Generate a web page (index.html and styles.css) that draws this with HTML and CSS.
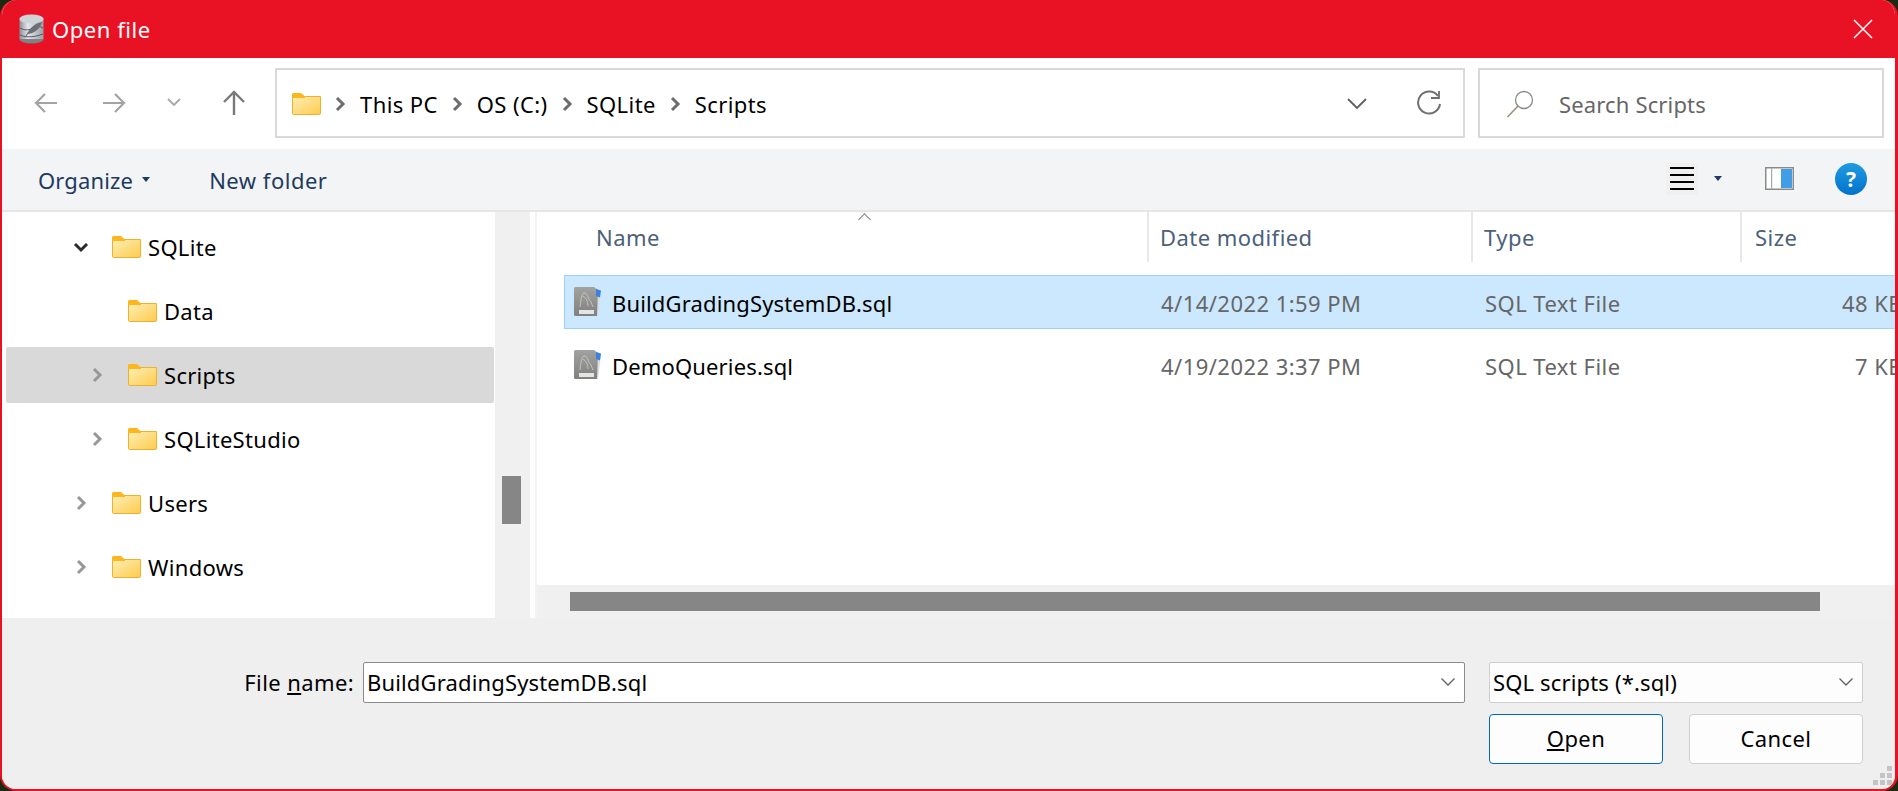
FILE: index.html
```html
<!DOCTYPE html>
<html lang="en">
<head>
  <meta charset="UTF-8">
  <title>Open file</title>
  <link rel="stylesheet" href="styles.css">
</head>
<body>
  <svg class="defs" width="0" height="0">
    <defs>
      <linearGradient id="folderFill" x1="0" y1="0" x2="1" y2="1">
        <stop offset="0" stop-color="#ffefb5"/>
        <stop offset="1" stop-color="#fdcb4e"/>
      </linearGradient>
      <linearGradient id="dbFill" x1="0" y1="0" x2="1" y2="0">
        <stop offset="0" stop-color="#8b8f96"/>
        <stop offset="0.35" stop-color="#e4e6ea"/>
        <stop offset="1" stop-color="#9a9ea6"/>
      </linearGradient>
      <linearGradient id="sqlFill" x1="0" y1="0" x2="0" y2="1">
        <stop offset="0" stop-color="#a2a2a0"/>
        <stop offset="1" stop-color="#808080"/>
      </linearGradient>
      <symbol id="folder" viewBox="0 0 29 22">
        <path d="M.5 3.5h28v17a1 1 0 0 1-1 1H1.500a1 1 0 0 1-1-1z" fill="url(#folderFill)" stroke="#efb02c"/>
        <path d="M0 1.500A1.500 1.500 0 0 1 1.500 0h7.500l4 3.500v1.500H0z" fill="#fbb71c"/>
      </symbol>
      <symbol id="chev-right" viewBox="0 0 12 16">
        <path d="M3 2l6 6-6 6" fill="none" stroke="currentColor" stroke-width="3"/>
      </symbol>
      <symbol id="chev-down" viewBox="0 0 16 12">
        <path d="M2 3l6 6 6-6" fill="none" stroke="currentColor" stroke-width="3"/>
      </symbol>
      <symbol id="thin-down" viewBox="0 0 16 10">
        <path d="M1.500 1.500L8 8l6.500-6.500" fill="none" stroke="currentColor" stroke-width="1.300"/>
      </symbol>
      <symbol id="sqlfile" viewBox="0 0 28 30">
        <path d="M22 3l5 1-3 25-4 0z" fill="#dcdcde"/>
        <path d="M1.500 0H20l4 3-1 26H1.500A1.500 1.500 0 0 1 0 27.500V1.500A1.500 1.500 0 0 1 1.500 0z" fill="url(#sqlFill)"/>
        <path d="M6 20C7 11 8 5 11 6c3 1 3 6 6 9l2 5M9 9c3 2 5 5 5 10" fill="none" stroke="#cfcfcd" stroke-width=".8"/>
        <rect x="5" y="23" width="15" height="4" fill="#e4e4e2"/>
        <path d="M22 2l5 1.500-1 7-4-1.500z" fill="#3b82e0"/>
      </symbol>
    </defs>
  </svg>

  <div class="dialog">
    <header class="titlebar">
      <svg class="app-icon" width="25" height="30" viewBox="0 0 25 30">
        <ellipse cx="12.500" cy="25" rx="12" ry="4.500" fill="#7d8188"/>
        <rect x=".5" y="5" width="24" height="20" fill="url(#dbFill)"/>
        <ellipse cx="12.500" cy="5" rx="12" ry="4.500" fill="#cfd2d7"/>
        <path d="M1 14c5 3 10 2 13 0s7-2 10 0M1 21c7 3 15 2 23-1" fill="none" stroke="#555a60" stroke-width="1"/>
        <path d="M5 25C9 16 15 9 23 8c-2 7-7 11-14 12z" fill="#6b7076"/>
      </svg>
      <span class="title-text">Open file</span>
      <svg class="close-icon" width="20" height="20" viewBox="0 0 20 20">
        <path d="M1 1l18 18M19 1L1 19" stroke="#fff" stroke-width="1.500"/>
      </svg>
    </header>

    <div class="addressbar">
      <div class="nav-btns">
        <svg class="nav-back" width="24" height="22" viewBox="0 0 24 22"><path d="M23 11H2M11 2l-9 9 9 9" fill="none" stroke="#a3a3a3" stroke-width="2.200"/></svg>
        <svg class="nav-forward" width="24" height="22" viewBox="0 0 24 22"><path d="M1 11h21M13 2l9 9-9 9" fill="none" stroke="#a3a3a3" stroke-width="2.200"/></svg>
        <svg class="nav-recent" width="14" height="9" viewBox="0 0 14 9"><path d="M1 1l6 6 6-6" fill="none" stroke="#a8a8a8" stroke-width="1.800"/></svg>
        <svg class="nav-up" width="24" height="26" viewBox="0 0 24 26"><path d="M12 25V3M2 12l10-10 10 10" fill="none" stroke="#7a7a7a" stroke-width="2.400"/></svg>
      </div>
      <div class="address-box">
        <svg class="crumb-folder" width="29" height="22"><use href="#folder"/></svg>
        <svg class="crumb-sep"><use href="#chev-right"/></svg>
        <span>This PC</span>
        <svg class="crumb-sep"><use href="#chev-right"/></svg>
        <span>OS (C:)</span>
        <svg class="crumb-sep"><use href="#chev-right"/></svg>
        <span>SQLite</span>
        <svg class="crumb-sep"><use href="#chev-right"/></svg>
        <span>Scripts</span>
        <svg class="address-drop" width="22" height="13" viewBox="0 0 22 13"><path d="M2 2l9 9 9-9" fill="none" stroke="#5f5f5f" stroke-width="1.800"/></svg>
        <svg class="address-refresh" width="25" height="27" viewBox="0 0 25 27"><path d="M21 6a11 11 0 1 0 2 8" fill="none" stroke="#6f6f6f" stroke-width="2"/><path d="M22 1v7h-8" fill="none" stroke="#6f6f6f" stroke-width="1.800"/></svg>
      </div>
      <div class="search-box">
        <svg width="28" height="28" viewBox="0 0 28 28"><circle cx="18" cy="10" r="8.500" fill="none" stroke="#8a8a8a" stroke-width="1.300"/><path d="M12 16L1.500 27" stroke="#9a8f7c" stroke-width="1.600"/></svg>
        <span>Search Scripts</span>
      </div>
    </div>

    <div class="toolbar">
      <span class="tool-btn">Organize</span>
      <span class="caret caret-organize"></span>
      <span class="tool-btn tool-new">New folder</span>
      <div class="tool-right">
        <span class="view-btn">
          <span class="view-line"></span><span class="view-line"></span><span class="view-line"></span><span class="view-line"></span>
        </span>
        <span class="caret"></span>
        <svg class="pane-icon" width="29" height="23" viewBox="0 0 29 23">
          <rect x=".75" y=".75" width="27.500" height="21.500" fill="#fff" stroke="#8b8b8b" stroke-width="1.500"/>
          <rect x="6" y="1" width="1.200" height="21" fill="#a8a8a8"/>
          <rect x="16" y="2" width="11" height="19" fill="#419de6"/>
        </svg>
        <span class="help-icon">?</span>
      </div>
    </div>

    <div class="panes">
      <nav class="tree">
        <div class="tree-row level-1">
          <svg class="tree-chev chev-open"><use href="#chev-down"/></svg>
          <svg class="folder"><use href="#folder"/></svg>
          <span>SQLite</span>
        </div>
        <div class="tree-row level-2">
          <span class="tree-chev"></span>
          <svg class="folder"><use href="#folder"/></svg>
          <span>Data</span>
        </div>
        <div class="tree-row level-2 tree-selected">
          <svg class="tree-chev"><use href="#chev-right"/></svg>
          <svg class="folder"><use href="#folder"/></svg>
          <span>Scripts</span>
        </div>
        <div class="tree-row level-2">
          <svg class="tree-chev"><use href="#chev-right"/></svg>
          <svg class="folder"><use href="#folder"/></svg>
          <span>SQLiteStudio</span>
        </div>
        <div class="tree-row level-1">
          <svg class="tree-chev"><use href="#chev-right"/></svg>
          <svg class="folder"><use href="#folder"/></svg>
          <span>Users</span>
        </div>
        <div class="tree-row level-1">
          <svg class="tree-chev"><use href="#chev-right"/></svg>
          <svg class="folder"><use href="#folder"/></svg>
          <span>Windows</span>
        </div>
      </nav>
      <div class="tree-scroll"><div class="tree-thumb"></div></div>
      <div class="splitter"></div>

      <section class="files">
        <div class="file-list">
          <div class="file-head">
            <span class="sort-arrow"></span>
            <div class="col-name">Name</div>
            <div>Date modified</div>
            <div>Type</div>
            <div>Size</div>
          </div>
          <div class="file-row file-selected">
            <div class="file-name"><svg width="28" height="30"><use href="#sqlfile"/></svg><span>BuildGradingSystemDB.sql</span></div>
            <div class="file-meta">4/14/2022 1:59 PM</div>
            <div class="file-meta">SQL Text File</div>
            <div class="file-meta file-size">48 KB</div>
          </div>
          <div class="file-row">
            <div class="file-name"><svg width="28" height="30"><use href="#sqlfile"/></svg><span>DemoQueries.sql</span></div>
            <div class="file-meta">4/19/2022 3:37 PM</div>
            <div class="file-meta">SQL Text File</div>
            <div class="file-meta file-size">7 KB</div>
          </div>
        </div>
        <div class="hscroll"><div class="hscroll-thumb"></div></div>
      </section>
    </div>

    <footer class="footer">
      <div class="footer-row">
        <label class="name-label" for="fileName">File <u>n</u>ame:</label>
        <div class="combo combo-name">
          <span id="fileName">BuildGradingSystemDB.sql</span>
          <svg width="16" height="10"><use href="#thin-down"/></svg>
        </div>
        <div class="combo combo-type">
          <span>SQL scripts (*.sql)</span>
          <svg width="16" height="10"><use href="#thin-down"/></svg>
        </div>
      </div>
      <div class="footer-buttons">
        <button class="btn btn-default"><u>O</u>pen</button>
        <button class="btn">Cancel</button>
      </div>
      <div class="grip">
        <i></i><i></i><i></i><i></i><i></i><i></i>
      </div>
    </footer>
  </div>
</body>
</html>
```

FILE: styles.css
```css
html, body {
  margin: 0;
  height: 100%;
  overflow: hidden;
  background-color: #1d2a12;
}

body {
  font-family: "Noto Sans", "Open Sans", sans-serif;
  font-size: 22px;
  letter-spacing: 0.15px;
  color: #000;
}

.defs {
  position: absolute;
}

.dialog {
  box-sizing: border-box;
  height: 791px;
  display: flex;
  flex-direction: column;
  border: 2px solid #e81224;
  border-right-width: 3px;
  border-top-width: 0;
  border-radius: 16px;
  overflow: hidden;
  background-color: #f0f0f0;
}

/* Title bar */
.titlebar {
  height: 58px;
  flex: none;
  display: flex;
  align-items: center;
  padding: 0 22px 0 17px;
  background-color: #e81224;
  color: #fff;
}

.app-icon {
  margin-right: 8px;
}

.title-text {
  letter-spacing: 0.55px;
}

.close-icon {
  margin-left: auto;
}

/* Address bar */
.addressbar {
  height: 91px;
  flex: none;
  box-sizing: border-box;
  display: flex;
  align-items: flex-start;
  padding-top: 10px;
  background-color: #fff;
}

.nav-btns {
  width: 273px;
  height: 69px;
  flex: none;
  display: flex;
  align-items: center;
  padding-left: 32px;
  box-sizing: border-box;
}

.nav-forward {
  margin-left: 44px;
}

.nav-recent {
  margin-left: 41px;
}

.nav-up {
  margin-left: 41px;
}

.address-box,
.search-box {
  box-sizing: border-box;
  height: 70px;
  display: flex;
  align-items: center;
  border: 2px solid #d9d9d9;
  background-color: #fff;
}

.address-box {
  width: 1190px;
  padding: 1px 0 0 15px;
  letter-spacing: 0.4px;
}

.crumb-sep {
  width: 12px;
  height: 16px;
  margin: 0 14px 0 13px;
  color: #6d6d6d;
}

.address-drop {
  margin-left: auto;
}

.address-refresh {
  margin: 0 21px 0 49px;
}

.search-box {
  width: 406px;
  margin-left: 13px;
  padding: 1px 0 0 26px;
  color: #666;
}

.search-box svg {
  margin-right: 25px;
}

/* Toolbar */
.toolbar {
  height: 63px;
  flex: none;
  box-sizing: border-box;
  display: flex;
  align-items: center;
  padding-left: 36px;
  background-color: #f3f4f6;
  border-bottom: 2px solid #e6e6e6;
  color: #1e3a5f;
}

.caret {
  width: 0;
  height: 0;
  border: 4px solid transparent;
  border-top: 5px solid #1e3a5f;
  border-bottom: 0;
}

.caret-organize {
  margin-left: 9px;
}

.tool-new {
  margin-left: 59px;
  letter-spacing: 0.5px;
}

.tool-right {
  margin-left: auto;
  display: flex;
  align-items: center;
  padding: 0 28px 2px 0;
}

.view-btn {
  width: 32px;
  height: 32px;
  display: flex;
  flex-direction: column;
  justify-content: center;
  align-items: center;
  gap: 5px;
  border-radius: 3px;
  background-color: #f0f0f0;
}

.view-line {
  width: 24px;
  height: 2px;
  background-color: #000;
}

.view-btn + .caret {
  margin-left: 16px;
}

.pane-icon {
  margin-left: 43px;
}

.help-icon {
  width: 32px;
  height: 32px;
  margin-left: 41px;
  display: flex;
  align-items: center;
  justify-content: center;
  border-radius: 50%;
  background: linear-gradient(#1f9be0, #0273cd);
  color: #fff;
  font-size: 21px;
  font-weight: 700;
}

/* Tree and file list */
.panes {
  flex: 1;
  min-height: 0;
  display: flex;
  background-color: #fff;
}

.tree {
  width: 493px;
  flex: none;
  box-sizing: border-box;
  padding: 7px 1px 0 4px;
}

.tree-row {
  height: 56px;
  margin-bottom: 8px;
  display: flex;
  align-items: center;
  border-radius: 2px;
  gap: 7px;
  letter-spacing: 0.3px;
}

.level-1 {
  padding-left: 69px;
}

.level-2 {
  padding-left: 85px;
}

.tree-chev {
  width: 12px;
  height: 16px;
  margin-right: 18px;
  color: #989898;
  flex: none;
}

.chev-open {
  width: 16px;
  height: 12px;
  margin-left: -2px;
  margin-right: 16px;
  color: #2b2b2b;
}

.folder {
  width: 29px;
  height: 22px;
  flex: none;
}

.tree-selected {
  background-color: #d9d9d9;
}

.tree-scroll {
  width: 35px;
  flex: none;
  background-color: #f0f0f0;
}

.tree-thumb {
  width: 19px;
  height: 48px;
  margin: 264px 0 0 7px;
  background-color: #868686;
}

.splitter {
  width: 7px;
  flex: none;
  border-right: 2px solid #f3f3f3;
  box-sizing: border-box;
}

.files {
  flex: 1;
  min-width: 0;
  display: flex;
  flex-direction: column;
}

.file-list {
  flex: 1;
  min-height: 0;
  overflow: hidden;
  padding-left: 27px;
}

.file-head,
.file-row {
  width: 1356px;
  display: grid;
  grid-template-columns: 585px 324px 269px 178px;
  box-sizing: border-box;
}

.file-head {
  position: relative;
  height: 50px;
  margin-bottom: 13px;
  align-items: center;
  color: #4c607a;
  letter-spacing: 0.45px;
}

.file-head div {
  height: 100%;
  display: flex;
  align-items: center;
  padding: 1px 0 1px 11px;
  border-right: 2px solid #e8e8e8;
  box-sizing: border-box;
}

.file-head .col-name {
  padding-left: 32px;
}

.file-head div:last-child {
  border-right: 0;
  padding-left: 13px;
}

.sort-arrow {
  position: absolute;
  left: 296px;
  top: 3px;
  width: 8px;
  height: 8px;
  border-left: 1px solid #7a7a7a;
  border-top: 1px solid #7a7a7a;
  transform: rotate(45deg);
}

.file-row {
  height: 54px;
  margin-bottom: 9px;
  align-items: center;
  border: 1px solid transparent;
}

.file-selected {
  background-color: #cce8ff;
  border-color: #99d1ff;
}

.file-name {
  display: flex;
  align-items: center;
  padding-left: 9px;
  gap: 10px;
}

.file-name span,
.file-meta {
  padding-top: 1px;
}

.file-meta {
  padding-left: 11px;
  color: #666;
  letter-spacing: 0.45px;
}

.file-size {
  text-align: right;
  padding-right: 18px;
}

.hscroll {
  height: 33px;
  flex: none;
  background-color: #f0f0f0;
}

.hscroll-thumb {
  width: 1250px;
  height: 19px;
  margin: 7px 0 0 33px;
  background-color: #868686;
}

/* Footer */
.footer {
  position: relative;
  flex: none;
  height: 171px;
  box-sizing: border-box;
  padding: 44px 32px 0 0;
  background-color: #efefef;
}

.footer-row {
  display: flex;
  align-items: center;
}

.name-label {
  width: 361px;
  flex: none;
  text-align: right;
  padding: 0 9px 2px 0;
  box-sizing: border-box;
  letter-spacing: 0.4px;
}

.combo {
  box-sizing: border-box;
  height: 41px;
  display: flex;
  align-items: center;
  justify-content: space-between;
  padding: 0 8px 2px 3px;
  background-color: #fff;
  border: 1px solid #8a8a8a;
  border-radius: 2px;
  color: #606060;
}

.combo span {
  color: #000;
}

.combo-name {
  width: 1102px;
}

.combo-type {
  width: 374px;
  margin-left: 24px;
  background-color: #fdfdfd;
  border-color: #cfcfcf;
}

.footer-buttons {
  display: flex;
  justify-content: flex-end;
  gap: 26px;
  margin-top: 11px;
}

.btn {
  width: 174px;
  height: 50px;
  padding: 0 0 2px;
  font: inherit;
  letter-spacing: 0.4px;
  color: #000;
  background-color: #fdfdfd;
  border: 1px solid #d0d0d0;
  border-radius: 4px;
}

.btn-default {
  border-color: #0067c0;
}

.grip {
  position: absolute;
  right: 3px;
  bottom: 4px;
  display: grid;
  grid-template-columns: repeat(3, 5px);
  grid-template-rows: repeat(3, 5px);
  gap: 2px;
}

.grip i {
  background-color: #c4c4c4;
}

.grip i:nth-child(1) {
  grid-area: 1 / 3;
}

.grip i:nth-child(2) {
  grid-area: 2 / 2;
}

.grip i:nth-child(3) {
  grid-area: 2 / 3;
}

.grip i:nth-child(4) {
  grid-area: 3 / 1;
}

.grip i:nth-child(5) {
  grid-area: 3 / 2;
}

.grip i:nth-child(6) {
  grid-area: 3 / 3;
}
```
